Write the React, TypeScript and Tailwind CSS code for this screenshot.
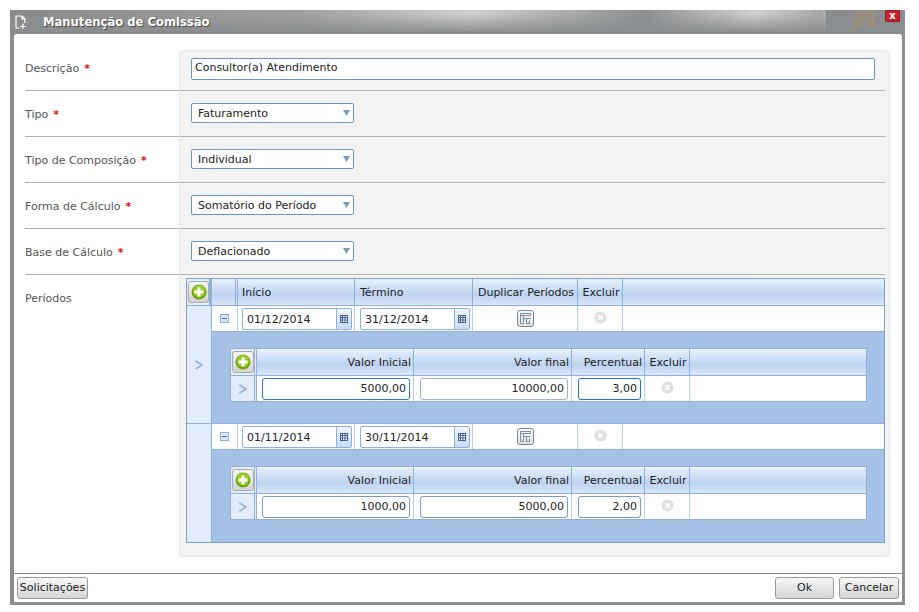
import React from 'react';

const PlusButton = () => (
  <div className="w-[22px] h-[22px] rounded-[3px] border border-[#a9a9a9] bg-gradient-to-b from-[#f6f6f6] to-[#d4d4d4] flex items-center justify-center">
    <svg width="16" height="16" viewBox="0 0 16 16">
      <circle cx="8" cy="8" r="7.5" fill="#6fa80c" />
      <circle cx="8" cy="7" r="6" fill="#9ccc2a" />
      <path d="M6.5 3.5h3v3h3v3h-3v3h-3v-3h-3v-3h3z" fill="#fff" />
    </svg>
  </div>
);

const Chevron = () => (
  <svg width="10" height="10" viewBox="0 0 10 10" fill="none">
    <path d="M1.5 1 8 5 1.5 9" stroke="#8fb2de" strokeWidth="1.6" />
  </svg>
);

const RemoveIcon = () => (
  <svg className="mb-[2px]" width="13" height="13" viewBox="0 0 14 14">
    <circle cx="7" cy="7" r="6.5" fill="#e0e0e0" />
    <path d="M4.8 4.8l4.4 4.4M9.2 4.8l-4.4 4.4" stroke="#fff" strokeWidth="1.9" />
  </svg>
);

const DuplicateIcon = () => (
  <div className="w-[17px] h-[17px] rounded-[3px] border border-[#7b8894] bg-gradient-to-b from-[#fbfbfb] to-[#dfe3e6] flex items-center justify-center">
    <svg width="13" height="13" viewBox="0 0 13 13" fill="none" stroke="#7d8c99" strokeWidth="1">
      <path d="M1.5 1.5h10v2h-10zM1.5 3.5v8h3v-8M4.5 6.5h7M7.5 6.5v5h3v-3" />
    </svg>
  </div>
);

const CalendarIcon = () => (
  <svg width="8" height="8" viewBox="0 0 8 8">
    <rect x="0.5" y="0.5" width="7" height="7" fill="#fff" stroke="#3f5f96" />
    <path d="M0 2.5h8M0 5h8M2.5 0v8M5 0v8" stroke="#3f5f96" strokeWidth="1" />
  </svg>
);

const DateField = ({ value }: { value: string }) => (
  <div className="w-[110px] h-[22px] mt-[1px] bg-white border border-[#8fb0d8] rounded-[2px] flex items-center">
    <span className="flex-1 pl-[4px] pt-[2px] text-[#222]">{value}</span>
    <div className="w-[15px] h-full border-l border-[#8fb0d8] bg-gradient-to-b from-[#f1f6fd] to-[#c9dcf4] flex items-center justify-center">
      <CalendarIcon />
    </div>
  </div>
);

const NumberField = ({ value, border, w }: { value: string; border: string; w: string }) => (
  <div className={`${w} h-[22px] bg-white rounded-[3px] border flex items-center justify-end pr-[3px] pt-[2px] text-[#222] ${border}`}>
    {value}
  </div>
);

const headCell = 'h-full shrink-0 border-r border-[#8fb0d8] bg-gradient-to-b from-[#eaf3fe] via-[#bdd3f1] via-60% to-[#d8e6f8] flex items-center pt-[2px] text-[#222] whitespace-nowrap';
const plainHead = 'h-full shrink-0 border-r-[3px] border-double border-[#8fb0d8] bg-[#e6eefb] flex items-center justify-center';
const bodyCell = 'h-full shrink-0 border-r border-[#b9cfe9] flex items-center';

type InnerProps = { start: string; end: string; pct: string; startBorder: string; endBorder: string; pctBorder: string };

const InnerGrid = ({ start, end, pct, startBorder, endBorder, pctBorder }: InnerProps) => (
  <div className="w-[637px] border border-[#8fb0d8] bg-white">
    <div className="h-[27px] flex border-b border-[#8fb0d8]">
      <div className={`${plainHead} w-[26px]`}><PlusButton /></div>
      <div className={`${headCell} w-[157px] justify-end pr-[2px]`}>Valor Inicial</div>
      <div className={`${headCell} w-[158px] justify-end pr-[2px]`}>Valor final</div>
      <div className={`${headCell} w-[73px] justify-end pr-[2px]`}>Percentual</div>
      <div className={`${headCell} w-[45px] justify-center pl-[2px]`}>Excluir</div>
      <div className={`${headCell} flex-1 border-r-0`} />
    </div>
    <div className="h-[25px] flex">
      <div className="h-full w-[26px] shrink-0 bg-[#e2ecfa] border-r-[3px] border-double border-[#8fb0d8] flex items-center justify-center"><Chevron /></div>
      <div className={`${bodyCell} w-[157px] pl-[5px]`}><NumberField value={start} border={startBorder} w="w-[148px]" /></div>
      <div className={`${bodyCell} w-[158px] pl-[6px]`}><NumberField value={end} border={endBorder} w="w-[148px]" /></div>
      <div className={`${bodyCell} w-[73px] pl-[6px]`}><NumberField value={pct} border={pctBorder} w="w-[63px]" /></div>
      <div className={`${bodyCell} w-[45px] justify-center`}><RemoveIcon /></div>
      <div className="flex-1" />
    </div>
  </div>
);

const Period = ({ from, to, chevron, last, children }: { from: string; to: string; chevron?: boolean; last?: boolean; children: React.ReactNode }) => (
  <div className={`h-[118px] flex ${last ? '' : 'border-b border-[#8fb0d8]'}`}>
    <div className="h-full w-[25px] shrink-0 bg-[#e2ecfa] border-r border-[#8fb0d8] flex items-center justify-center">
      {chevron && <Chevron />}
    </div>
    <div className="flex-1 flex flex-col">
      <div className="h-[25px] shrink-0 flex bg-white">
        <div className={`${bodyCell} w-[26px] justify-center`}>
          <div className="w-[9px] h-[9px] border border-[#8fb0d8] bg-[#dce8f8] flex items-center justify-center">
            <div className="w-[5px] h-px bg-[#3f6ea8]" />
          </div>
        </div>
        <div className={`${bodyCell} w-[117px] pl-[4px]`}><DateField value={from} /></div>
        <div className={`${bodyCell} w-[118px] pl-[5px]`}><DateField value={to} /></div>
        <div className={`${bodyCell} w-[105px] justify-center`}><DuplicateIcon /></div>
        <div className={`${bodyCell} w-[45px] justify-center`}><RemoveIcon /></div>
        <div className="flex-1" />
      </div>
      <div className="flex-1 border-t border-[#8fb0d8] bg-[#a5c1e6] pl-[18px] pt-[16px]">{children}</div>
    </div>
  </div>
);

const Row = ({ label, children, h, first, last, labelClass }: { label: string; children: React.ReactNode; h: string; first?: boolean; last?: boolean; labelClass: string }) => (
  <div className={`flex ${h}`}>
    <div className={`w-[154px] shrink-0 flex text-[#555] ${labelClass} ${last ? '' : 'items-center border-b border-[#b4b4b4]'}`}>
      <span>
        {label}
        {!last && <span className="text-[#e01010] font-bold ml-[5px]">*</span>}
      </span>
    </div>
    <div className={`w-[711px] shrink-0 bg-[#f3f3f3] border-x border-[#e8e8e8] ${first ? 'border-t rounded-t-[4px]' : ''} ${last ? 'border-b rounded-b-[4px]' : ''}`}>
      <div className={`w-[705px] h-full flex ${last ? '' : 'items-center border-b border-[#b4b4b4]'}`}>{children}</div>
    </div>
  </div>
);

const Select = ({ value }: { value: string }) => (
  <div className="ml-[11px] mb-[2px] w-[163px] h-[20px] bg-white border border-[#6b94bf] rounded-[2px] flex items-center justify-between pl-[6px] pr-[3px] text-[#222]">
    <span className="pt-[3px]">{value}</span>
    <svg width="7" height="7" viewBox="0 0 7 7"><path d="M0 1h7L3.5 7z" fill="#7a9cc0" /></svg>
  </div>
);

const Button = ({ label, w }: { label: string; w: string }) => (
  <button className={`${w} h-[22px] rounded-[3px] border border-[#9a9a9a] bg-gradient-to-b from-[#f7f7f7] to-[#d6d6d6] text-[#222]`}>{label}</button>
);

export default function App() {
  return (
    <div className="w-[919px] h-[612px] bg-white pt-[10px] pl-[10px] text-[11px] overflow-hidden" style={{ fontFamily: '"DejaVu Sans", sans-serif' }}>
      <div className="w-[895px] h-[595px] flex flex-col bg-[#8c8c8c] pl-[4px] pr-[3px] pb-[3px]">
        {/* Title bar */}
        <div className="h-[24px] -ml-[4px] -mr-[3px] flex items-center bg-[linear-gradient(to_bottom,rgba(138,141,143,0)_15%,#8a8d8f_95%),linear-gradient(to_right,#8a8a8a_0,#a0a0a0_290px,#d0d0d0_460px,#8c8f91_633px,#d0d0d0_744px,#a8a8a8_813px,#b8b8b8_814px,#b8b8b8_815px,#8a8d90_816px)] pl-[4px] pr-[5px] shrink-0">
          <svg width="15" height="15" viewBox="0 0 15 15" fill="none" stroke="#fff" strokeWidth="1.2">
            <path d="M5 13H2V1h6l3 3v4M8 1v3h3M9 8.5v5.5M6 11.5h6" />
          </svg>
          <span className="ml-[14px] mt-[2px] text-[11.6px] font-bold text-white [text-shadow:1px_1px_1px_#444]">Manutenção de Comissão</span>
          <svg className="ml-auto mr-[10px] mt-[-7px]" width="20" height="17" viewBox="0 0 20 17">
            <path d="M0 0h20v17h-7v-5H7v5H0z" fill="#9c8f78" />
            <path d="M0 4h20M0 8h20M5 0v12M10 0v12M15 0v12" stroke="#8f8f8a" strokeWidth="1" />
          </svg>
          <div className="w-[15px] h-[12px] mt-[-12px] rounded-[1px] bg-[#c8202c] border border-[#8f1d24] flex items-center justify-center text-white text-[10px] font-bold leading-none">x</div>
        </div>
        {/* Body */}
        <div className="flex-1 min-h-0 bg-white rounded-t-[3px] flex flex-col">
          <div className="flex-1 pt-[16px] pl-[11px]">
            <Row label="Descrição" h="h-[41px]" first labelClass="pb-[2px]">
              <div className="ml-[11px] mb-[4px] w-[684px] h-[22px] bg-white border border-[#6b94bf] rounded-[2px] flex items-center pl-[3px] text-[#222]">Consultor(a) Atendimento</div>
            </Row>
            <Row label="Tipo" h="h-[46px]" labelClass="pt-[3px]"><Select value="Faturamento" /></Row>
            <Row label="Tipo de Composição" h="h-[46px]" labelClass="pt-[3px]"><Select value="Individual" /></Row>
            <Row label="Forma de Cálculo" h="h-[46px]" labelClass="pt-[3px]"><Select value="Somatório do Período" /></Row>
            <Row label="Base de Cálculo" h="h-[46px]" labelClass="pt-[3px]"><Select value="Deflacionado" /></Row>
            <Row label="Períodos" h="h-[282px]" last labelClass="pt-[16px]">
              <div className="ml-[6px] mt-[3px] w-[699px] h-[265px] border border-[#7ba3d3]">
                <div className="h-[27px] flex border-b border-[#8fb0d8]">
                  <div className={`${plainHead} w-[25px] border-r border-solid pl-[1px]`}><PlusButton /></div>
                  <div className={`${headCell} w-[26px] border-r-[3px] border-double`} />
                  <div className={`${headCell} w-[117px] pl-[4px] pt-[3px]`}>Início</div>
                  <div className={`${headCell} w-[118px] pl-[5px] pt-[3px]`}>Término</div>
                  <div className={`${headCell} w-[105px] justify-center pl-[2px] pt-[3px]`}>Duplicar Períodos</div>
                  <div className={`${headCell} w-[45px] justify-center pl-[2px] pt-[3px]`}>Excluir</div>
                  <div className={`${headCell} flex-1 border-r-0`} />
                </div>
                <Period from="01/12/2014" to="31/12/2014" chevron>
                  <InnerGrid start="5000,00" end="10000,00" pct="3,00" startBorder="border-[#2a7fb8]" endBorder="border-[#9fb2c8]" pctBorder="border-[#1b7ab8]" />
                </Period>
                <Period from="01/11/2014" to="30/11/2014" last>
                  <InnerGrid start="1000,00" end="5000,00" pct="2,00" startBorder="border-[#7f9cc0]" endBorder="border-[#7f9cc0]" pctBorder="border-[#7f9cc0]" />
                </Period>
              </div>
            </Row>
          </div>
          {/* Footer */}
          <div className="h-[29px] shrink-0 border-t border-[#8c8c8c] flex items-center justify-between pl-[3px] pr-[3px]">
            <Button label="Solicitações" w="w-[71px]" />
            <div className="flex gap-[5px]">
              <Button label="Ok" w="w-[59px]" />
              <Button label="Cancelar" w="w-[60px]" />
            </div>
          </div>
        </div>
      </div>
    </div>
  );
}
